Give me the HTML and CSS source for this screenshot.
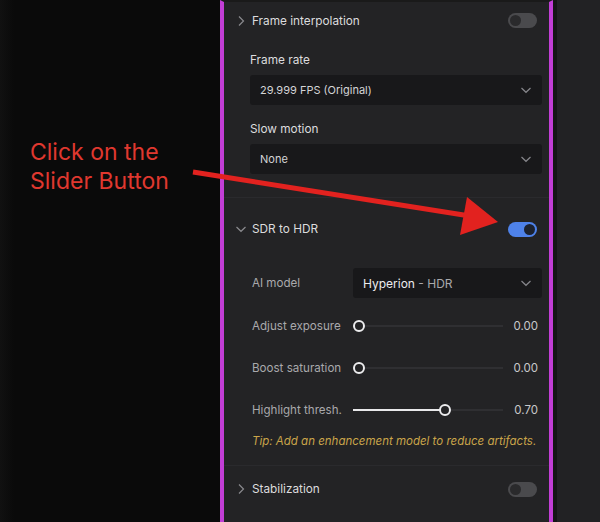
FILE: index.html
```html
<!DOCTYPE html>
<html>
<head>
<meta charset="utf-8">
<link rel="stylesheet" href="styles.css">
</head>
<body>
<div class="page">
  <div class="annot">
    <p class="annot-text">Click on the<br>Slider Button</p>
  </div>
  <div class="panel">
    <section class="sec sec-first">
      <div class="head">
        <svg class="chev" width="8" height="12" viewBox="0 0 8 12"><path d="M2 1.5 L6.5 6 L2 10.5" fill="none" stroke="#8a8a8e" stroke-width="1.2"/></svg>
        <span class="head-title">Frame interpolation</span>
        <span class="toggle"><span class="knob"></span></span>
      </div>
      <div class="field-label">Frame rate</div>
      <div class="select"><span>29.999 FPS (Original)</span>
        <svg class="dd" width="12" height="8" viewBox="0 0 12 8"><path d="M1.5 2 L6 6.3 L10.5 2" fill="none" stroke="#85858a" stroke-width="1.2"/></svg></div>
      <div class="field-label fl2">Slow motion</div>
      <div class="select"><span>None</span>
        <svg class="dd" width="12" height="8" viewBox="0 0 12 8"><path d="M1.5 2 L6 6.3 L10.5 2" fill="none" stroke="#85858a" stroke-width="1.2"/></svg></div>
    </section>
    <section class="sec sec-hdr">
      <div class="head">
        <svg class="chev" width="12" height="8" viewBox="0 0 12 8"><path d="M1.5 2 L6 6.3 L10.5 2" fill="none" stroke="#8a8a8e" stroke-width="1.2"/></svg>
        <span class="head-title">SDR to HDR</span>
        <span class="toggle on"><span class="knob"></span></span>
      </div>
      <div class="row row-model">
        <span class="row-label">AI model</span>
        <div class="select select-model"><span><span class="hi">Hyperion</span> - HDR</span>
          <svg class="dd" width="12" height="8" viewBox="0 0 12 8"><path d="M1.5 2 L6 6.3 L10.5 2" fill="none" stroke="#85858a" stroke-width="1.2"/></svg></div>
      </div>
      <div class="row">
        <span class="row-label">Adjust exposure</span>
        <div class="slider"><div class="fill" style="width:0%"></div><div class="thumb" style="left:0%"></div></div>
        <span class="val">0.00</span>
      </div>
      <div class="row">
        <span class="row-label">Boost saturation</span>
        <div class="slider"><div class="fill" style="width:0%"></div><div class="thumb" style="left:0%"></div></div>
        <span class="val">0.00</span>
      </div>
      <div class="row">
        <span class="row-label">Highlight thresh.</span>
        <div class="slider"><div class="fill" style="width:61%"></div><div class="thumb thumb-mid" style="left:61%"></div></div>
        <span class="val">0.70</span>
      </div>
      <p class="tip">Tip: Add an enhancement model to reduce artifacts.</p>
    </section>
    <section class="sec sec-last">
      <div class="head">
        <svg class="chev" width="8" height="12" viewBox="0 0 8 12"><path d="M2 1.5 L6.5 6 L2 10.5" fill="none" stroke="#8a8a8e" stroke-width="1.2"/></svg>
        <span class="head-title">Stabilization</span>
        <span class="toggle"><span class="knob"></span></span>
      </div>
    </section>
  </div>
  <div class="side"></div>
  <svg class="arrow" width="600" height="522" viewBox="0 0 600 522">
    <line x1="193" y1="172" x2="470" y2="216" stroke="#e2221f" stroke-width="5"/>
    <polygon points="498,222 467,197 460,235" fill="#e2221f"/>
  </svg>
</div>
</body>
</html>
```
FILE: styles.css
```css
html, body {
  margin: 0;
  padding: 0;
  background: #0a0a0a;
}
body {
  font-family: Inter, "Noto Sans", sans-serif;
  width: 600px;
  height: 522px;
  overflow: hidden;
}
.page {
  position: relative;
  display: flex;
  width: 600px;
  height: 522px;
}
.annot {
  width: 220px;
  flex: none;
  background: linear-gradient(90deg, #111 0px, #0a0a0a 14px, #0a0a0a 100%);
}
.annot-text {
  margin: 138px 0 0 30px;
  font-size: 23px;
  line-height: 29px;
  color: #e0382f;
}
.panel {
  width: 325px;
  flex: none;
  background: #232325;
  border-left: 4px solid #c23ed6;
  border-right: 4px solid #c23ed6;
  border-top: 2px solid #1a1a1a;
  box-sizing: content-box;
  height: 520px;
  display: flex;
  flex-direction: column;
}
.side {
  flex: 1;
  background: #222224;
  border-left: 4px solid #151516;
}
.sec {
  border-bottom: 1px solid #2a2a2d;
}
.sec-last {
  border-bottom: none;
}
.head {
  display: flex;
  align-items: center;
  height: 36px;
  padding: 0 12px 0 11px;
}
.sec-first .head {
  height: 37px;
}
.chev {
  width: 12px;
  flex: none;
  margin-right: 5px;
}
.head-title {
  flex: 1;
  font-size: 11.8px;
  color: #dcdcde;
}
.toggle {
  width: 29px;
  height: 15px;
  border-radius: 8px;
  background: #4a4a4d;
  position: relative;
  flex: none;
}
.toggle .knob {
  position: absolute;
  top: 2px;
  left: 2px;
  width: 11px;
  height: 11px;
  border-radius: 50%;
  background: #2a2a2c;
}
.toggle.on {
  background: #4e82ea;
}
.toggle.on .knob {
  left: 16px;
  background: #1c2230;
}
.field-label {
  margin: 13px 0 0 26px;
  font-size: 11.8px;
  line-height: 16px;
  color: #dcdcde;
}
.fl2 {
  margin-top: 16px;
}
.select {
  margin: 7px 7px 0 26px;
  height: 30px;
  background: #18181a;
  border-radius: 3px;
  display: flex;
  align-items: center;
  justify-content: space-between;
  padding: 0 10px 0 10px;
  font-size: 11px;
  color: #d4d4d6;
}
.sec-first {
  padding-bottom: 23px;
}
.sec-hdr {
  padding-top: 13px;
  padding-bottom: 16px;
}
.row {
  display: flex;
  align-items: center;
  height: 28px;
  margin: 14px 11px 0 28px;
}
.row-model {
  margin-top: 21px;
  margin-right: 7px;
  height: 30px;
}
.row-label {
  width: 101px;
  flex: none;
  font-size: 11.6px;
  color: #a9a9ac;
}
.select-model {
  margin: 0;
  flex: 1;
  font-size: 12px;
  color: #a9a9ac;
}
.hi {
  color: #ececee;
}
.slider {
  position: relative;
  width: 150px;
  height: 2px;
  background: #2f2f32;
  flex: none;
}
.fill {
  position: absolute;
  left: 0;
  top: 0;
  height: 2px;
  background: #e8e8ea;
}
.thumb {
  position: absolute;
  top: -5px;
  width: 8px;
  height: 8px;
  border: 2px solid #ececee;
  border-radius: 50%;
  background: #232325;
}
.thumb-mid {
  margin-left: -6px;
}
.val {
  flex: 1;
  text-align: right;
  font-size: 11.5px;
  color: #c8c8ca;
}
.tip {
  margin: 9px 0 0 28px;
  font-size: 11.5px;
  font-style: italic;
  color: #caa54a;
  line-height: 16px;
}
.sec-last .head {
  height: 46px;
}
.arrow {
  position: absolute;
  left: 0;
  top: 0;
  pointer-events: none;
}
```
